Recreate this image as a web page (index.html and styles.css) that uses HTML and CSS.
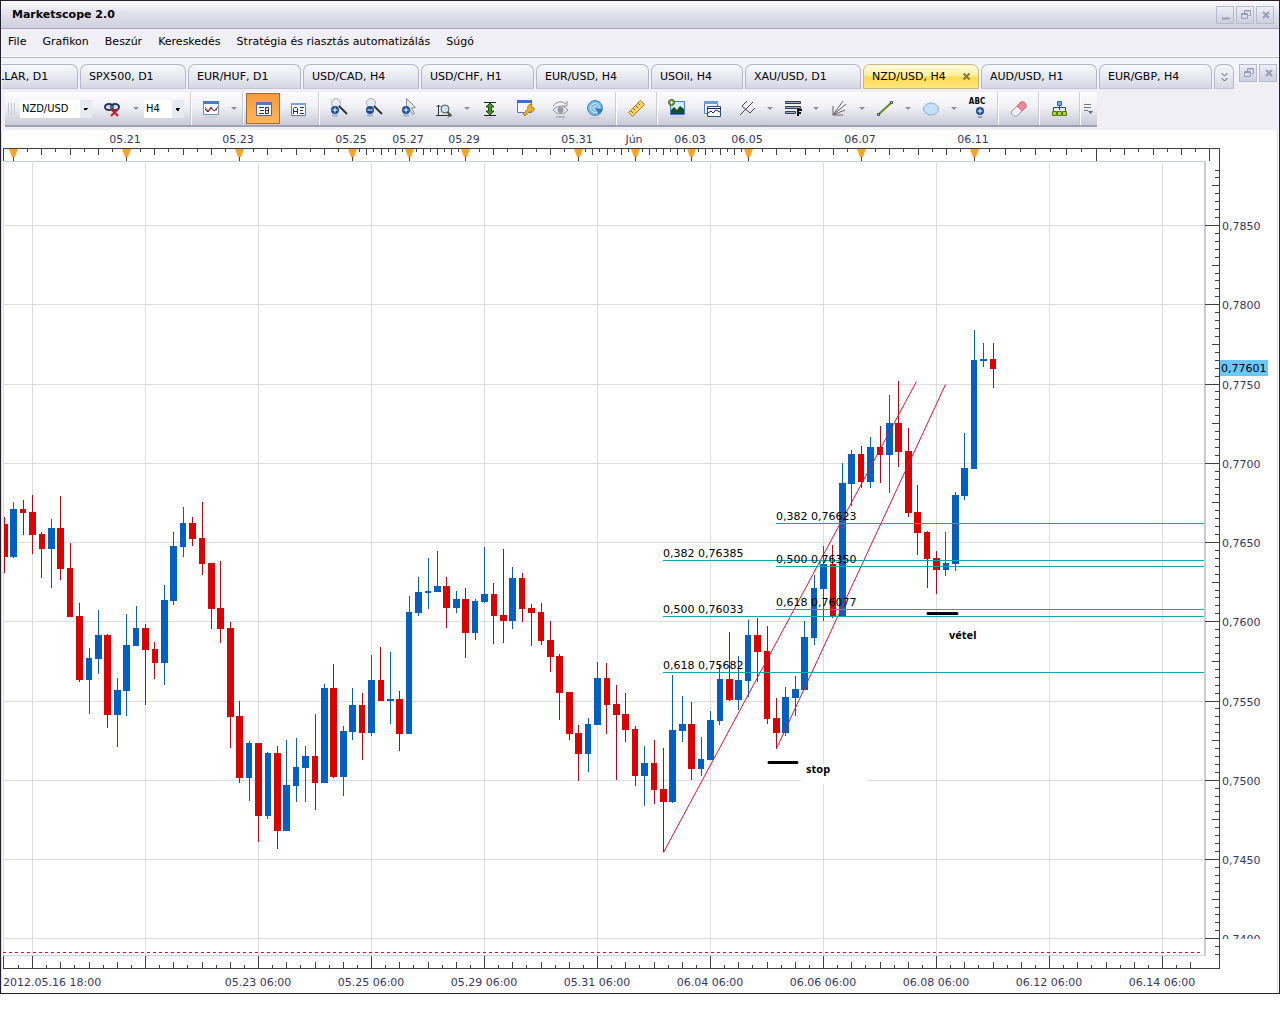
FILE: index.html
```html
<!DOCTYPE html>
<html lang="hu">
<head>
<meta charset="utf-8">
<title>Marketscope 2.0</title>
<link rel="stylesheet" href="styles.css">
</head>
<body>
<div class="window">
  <header class="titlebar">
    <h1 class="title">Marketscope 2.0</h1>
    <div class="winbtns">
      <button class="winbtn" aria-label="Minimize"><svg width="18" height="18"><path d="M5 12.500h8" class="glyph wide"/></svg></button>
      <button class="winbtn" aria-label="Restore"><svg width="18" height="18"><path d="M7.500 7v-2.500h6v5h-2M7 5h7M4.500 7.500h6v5h-6zM4 8.500h7" class="glyph"/></svg></button>
      <button class="winbtn" aria-label="Close"><svg width="18" height="18"><path d="M6 6l6 6M12 6l-6 6" class="glyph wide"/></svg></button>
    </div>
  </header>
  <nav class="menubar">
    <button class="menu">File</button>
    <button class="menu">Grafikon</button>
    <button class="menu">Beszúr</button>
    <button class="menu">Kereskedés</button>
    <button class="menu">Stratégia és riasztás automatizálás</button>
    <button class="menu">Súgó</button>
  </nav>
  <div class="tabrow">
    <div class="tabs">
      <button class="tab cut"><span class="cut-label">LLAR, D1</span></button>
      <button class="tab small">SPX500, D1</button>
      <button class="tab mid">EUR/HUF, D1</button>
      <button class="tab">USD/CAD, H4</button>
      <button class="tab mid">USD/CHF, H1</button>
      <button class="tab mid">EUR/USD, H4</button>
      <button class="tab short">USOil, H4</button>
      <button class="tab">XAU/USD, D1</button>
      <button class="tab active">NZD/USD, H4<svg width="9" height="9"><path d="M1.500 1.500l6 6M7.500 1.500l-6 6" stroke="#8a7440" stroke-width="2"/></svg></button>
      <button class="tab">AUD/USD, H1</button>
      <button class="tab mid">EUR/GBP, H4</button>
      <button class="tab more" aria-label="More tabs"><svg width="9" height="10"><path d="M1.500 1l3 3 3-3M1.500 6l3 3 3-3" fill="none" stroke="#555"/></svg></button>
    </div>
    <div class="docbtns">
      <button class="winbtn" aria-label="Restore chart"><svg width="18" height="18"><path d="M7.500 7v-2.500h6v5h-2M7 5h7M4.500 7.500h6v5h-6zM4 8.500h7" class="glyph"/></svg></button>
      <button class="winbtn" aria-label="Close chart"><svg width="18" height="18"><path d="M6 6l6 6M12 6l-6 6" class="glyph wide"/></svg></button>
    </div>
  </div>
  <div class="toolrow">
    <div class="toolbar">
      <span class="grip"></span>
      <select class="combo symbol" aria-label="Symbol"><option>NZD/USD</option></select>
      <button class="tool" aria-label="Unlink"><svg width="24" height="24" fill="none"><ellipse cx="8" cy="10" rx="4" ry="3" stroke="#1d3557" stroke-width="2"/><ellipse cx="14" cy="10" rx="4" ry="3" stroke="#1d3557" stroke-width="2"/><path d="M7 10h8" stroke="#8fa8c4"/><path d="M10 12l7 7M17 12l-7 7" stroke="#d01828" stroke-width="2"/></svg></button>
      <button class="caret" aria-label="Link options"></button>
      <select class="combo period" aria-label="Period"><option>H4</option></select>
      <span class="sep"></span>
      <button class="tool" aria-label="Chart type"><svg width="24" height="24" fill="none"><path d="M4.500 4.500h15v13h-15z" fill="#fff" stroke="#7890b8"/><path d="M4 4h16v3H4z" fill="#4a7cc8"/><path d="M6 12l3 3 3-4 3 3 3-2" stroke="#222"/><path d="M6 10l3 4 3-4 3 4 4-4" stroke="#c83030"/><path d="M6 20h13" stroke="#c4c6d4"/></svg></button>
      <button class="caret" aria-label="Chart type options"></button>
      <span class="sep"></span>
      <button class="tool pressed" aria-label="Data window"><svg width="24" height="24" fill="none"><path d="M5.500 5.500h15v13h-15z" fill="#f4f4fc" stroke="#506898"/><path d="M5 5h16v3H5z" fill="#4a7cc8"/><path d="M8 10.500h5M9 13.500h4M8 16.500h5M14.500 10v7M14 10.500h3.500v6H14M14 13.500h4" stroke="#333"/></svg></button>
      <button class="tool" aria-label="Labels"><svg width="24" height="24" fill="none"><path d="M5.500 6.500h14v12h-14z" fill="#f8f8ff" stroke="#607cb0"/><path d="M5 6h15v2H5z" fill="#7ca0d8"/><path d="M7.500 17v-5.500l1-1h2l1 1V17M8 14.500h4M14 10.500h4M14 13.500h3M14 16.500h4" stroke="#333"/><path d="M6 20h13" stroke="#c4c6d4"/></svg></button>
      <span class="sep"></span>
      <button class="tool" aria-label="Zoom in"><svg width="24" height="24" fill="none"><circle cx="9" cy="6" r="4.500" fill="#e8eaf0" stroke="#a8acb8"/><path d="M12 9l8 8" stroke="#333" stroke-width="2"/><circle cx="8" cy="13" r="4" fill="#1c4c94"/><path d="M5.500 13h5M8 10.500v5" stroke="#fff"/><path d="M5 18.500h6" stroke="#9caed0" stroke-width="2"/></svg></button>
      <button class="tool" aria-label="Zoom out"><svg width="24" height="24" fill="none"><circle cx="9" cy="6" r="4.500" fill="#e8eaf0" stroke="#a8acb8"/><path d="M12 9l8 8" stroke="#333" stroke-width="2"/><circle cx="8" cy="13" r="4" fill="#1c4c94"/><path d="M5.500 13h5" stroke="#fff"/><path d="M5 18.500h6" stroke="#9caed0" stroke-width="2"/></svg></button>
      <button class="tool" aria-label="Zoom area"><svg width="24" height="24" fill="none"><path d="M9.500 1.500v13l3-3 3 6 2-1-3-5.500 4-.5z" fill="#e8e8ec" stroke="#8a8c94"/><circle cx="9" cy="13" r="4" fill="#1c4c94"/><path d="M6.500 13h5M9 10.500v5" stroke="#fff"/><path d="M6 18.500h6" stroke="#9caed0" stroke-width="2"/></svg></button>
      <button class="tool" aria-label="Scale"><svg width="24" height="24" fill="none"><path d="M6.500 8v11M4.500 10l2-2 2 2M4 18.500h14M16 16.500l2 2-2 2" stroke="#333"/><circle cx="13" cy="12" r="4" fill="#c8e4f8" stroke="#555"/><path d="M15.500 15l4 4" stroke="#555" stroke-width="2"/></svg></button>
      <button class="caret" aria-label="Scale options"></button>
      <button class="tool" aria-label="Fit height"><svg width="24" height="24" fill="none"><path d="M6 5.500h12M6 18.500h12" stroke="#222"/><path d="M12 6l4 4h-2.500v4H16l-4 4-4-4h2.500v-4H8z" fill="#4c9028" stroke="#1c4c14"/><path d="M8 21h8" stroke="#b8bac4"/></svg></button>
      <button class="tool" aria-label="Properties"><svg width="24" height="24" fill="none"><path d="M4.500 3.500h14v12h-14z" fill="#f4f6ff" stroke="#4a7cc8"/><path d="M4 3h15v3H4z" fill="#3c70c8"/><path d="M10 17l5-5c-1-3 1-5 4-5l-1 3 3 1c1 3-2 4-4 3l-5 5z" fill="#f4b428" stroke="#b87c10"/></svg></button>
      <button class="tool" aria-label="Show or hide"><svg width="24" height="24" fill="none" stroke="#8c8e98"><path d="M5 13c4-5 11-5 15 0-4 5-11 5-15 0z" fill="#e4e5ea"/><circle cx="12.500" cy="13" r="2.500" fill="#9a9ca4"/><path d="M5 9c4-5 9-5 13-2M19 4v5h-5M8 20h9"/></svg></button>
      <button class="tool" aria-label="Web"><svg width="24" height="24" fill="none"><circle cx="12" cy="11" r="7.500" fill="#78b8e4" stroke="#3c84bc"/><circle cx="12" cy="11" r="4.500" stroke="#d4ecfc"/><circle cx="12" cy="11" r="2" stroke="#d4ecfc"/><path d="M12 11l4 6c2-1 3-3 3-5z" fill="#3078b8"/><path d="M7 21h10" stroke="#b4c0d4"/></svg></button>
      <span class="sep"></span>
      <button class="tool" aria-label="Ruler"><svg width="24" height="24" fill="none"><path d="M4.500 15.500l12-12 4 4-12 12z" fill="#f8d468" stroke="#a87c28"/><path d="M7 14l2 2M9.500 11.500l1.500 1.500M12 9l2 2M14.500 6.500L16 8" stroke="#80601c"/></svg></button>
      <span class="sep"></span>
      <button class="tool" aria-label="Add picture"><svg width="24" height="24" fill="none"><path d="M5.500 4.500h14v13h-14z" fill="#d4ecfc" stroke="#4a7cc8"/><path d="M6 17v-4l3-3 3 3 3-4 4 3v5z" fill="#145028"/><circle cx="6.500" cy="5.500" r="3" fill="#78a83c" stroke="#3c641c"/><path d="M5 5.500h3M6.500 4v3" stroke="#fff"/><path d="M6 20h13" stroke="#c0c6d0"/></svg></button>
      <button class="tool" aria-label="Add indicator"><svg width="24" height="24" fill="none"><path d="M4.500 4.500h13v12h-13z" fill="#f4f6ff" stroke="#4a7cc8"/><path d="M4 4h14v3H4z" fill="#6c9ce0"/><path d="M7.500 9.500h13v10h-13z" fill="#fff" stroke="#285088"/><path d="M7 11.500h14M8 16l3-2 2 2 3-3 4 2" stroke="#222"/></svg></button>
      <button class="tool" aria-label="Pitchfork"><svg width="24" height="24" fill="none" stroke="#444"><path d="M5 18l6-6M7 9l8 7M7 9l5-5M11 12l7-7M15 16l5-5"/></svg></button>
      <button class="caret" aria-label="Pitchfork options"></button>
      <button class="tool" aria-label="Fibonacci"><svg width="24" height="24" fill="none"><path d="M4.500 4.500h15v2h-15zM4.500 9.500h15v2h-15zM4.500 14.500h10v2h-10z" fill="#9cacc0" stroke="#34404c"/><path d="M17 19v-6h4M17 16h3" stroke="#111" stroke-width="2"/></svg></button>
      <button class="caret" aria-label="Fibonacci options"></button>
      <button class="tool" aria-label="Fan lines"><svg width="24" height="24" fill="none" stroke="#666"><path d="M6 18L16 4M6 18L19 7M6 18l12-5M6 18V9M6 18h10"/></svg></button>
      <button class="caret" aria-label="Fan options"></button>
      <button class="tool" aria-label="Line"><svg width="24" height="24" fill="none"><path d="M6 17L18 6" stroke="#648c1c" stroke-width="2"/><path d="M4.500 16.500h2v2h-2zM17.500 4.500h2v2h-2z" fill="#ddd" stroke="#445"/></svg></button>
      <button class="caret" aria-label="Line options"></button>
      <button class="tool" aria-label="Ellipse"><svg width="24" height="24"><ellipse cx="12" cy="12" rx="7.500" ry="6" fill="#c4e0f8" stroke="#88aed0"/></svg></button>
      <button class="caret" aria-label="Shape options"></button>
      <button class="tool" aria-label="Text label"><span class="abc">ABC</span><svg width="24" height="14" fill="none"><circle cx="15" cy="5" r="4" fill="#1c4c94"/><path d="M12.500 5h5M15 2.500v5" stroke="#fff"/><path d="M13 11h4" stroke="#8ca4cc" stroke-width="2"/></svg></button>
      <span class="sep"></span>
      <button class="tool" aria-label="Eraser"><svg width="24" height="24"><path d="M5 15l6-6 5 5-5 5c-2 1-6-1-6-4z" fill="#f0f0f0" stroke="#98989c"/><path d="M11 9l4-4c2-1 6 1 5 5l-4 4z" fill="#f08898" stroke="#c86878"/></svg></button>
      <span class="sep"></span>
      <button class="tool" aria-label="Hierarchy"><svg width="24" height="24" fill="none"><path d="M12.500 8v5M6.500 14v-3.500h12V14" stroke="#345"/><path d="M10.500 4.500h4v4h-4z" fill="#68b0f4" stroke="#2464b4"/><path d="M5.500 14.500h4v4h-4zM10.500 14.500h4v4h-4zM15.500 14.500h4v4h-4z" fill="#b4d424" stroke="#4c7c10"/></svg></button>
      <span class="sep"></span>
      <button class="overflow" aria-label="More tools"><svg width="10" height="12"><path d="M1 1.500h7M1 4.500h7M1 7.500h4" stroke="#777"/><path d="M5 8h5l-2.500 3z" fill="#666"/></svg></button>
    </div>
  </div>
  <main class="chart">
    <svg id="chart" viewBox="1 130 1278 863" role="img" aria-label="NZD/USD, H4"></svg>
  </main>
</div>
<script src="chart.js"></script>
</body>
</html>
```
FILE: styles.css
```css
* { box-sizing: border-box; }
body { margin: 0; background: #fff; font: 11px/14px "DejaVu Sans", Verdana, sans-serif; color: #000; }
button, select { font: inherit; color: inherit; margin: 0; padding: 0; border: 0; background: none; border-radius: 0; }
svg { display: block; }

.window { border: 1px solid #22202c; background: #f0eff5; overflow: hidden; }

.titlebar { display: flex; align-items: center; justify-content: space-between; height: 28px; padding: 0 5px 0 11px; background: linear-gradient(#fcfcff, #e4e4ee 40%, #cfcfde); border-bottom: 1px solid #a6a6b8; }
.title { margin: 0; font-size: 11px; line-height: 14px; }
.winbtns, .docbtns { display: flex; gap: 2px; }
.winbtn { width: 18px; height: 18px; border: 1px solid #b8bacc; background: linear-gradient(#eeeef6, #cdcfe0); display: flex; align-items: center; justify-content: center; flex: none; }
.glyph { fill: none; stroke: #9a9cb6; }
.wide { stroke-width: 2; }

.menubar { display: flex; align-items: center; gap: 16px; height: 28px; padding: 0 7px 1px; border-bottom: 1px solid #fff; white-space: nowrap; }

.tabrow { display: flex; justify-content: space-between; align-items: flex-end; height: 32px; padding: 0 2px 0 1px; border-top: 1px solid #b4b4c4; background: linear-gradient(#f4f4fc, #f0eff5); }
.tabs { display: flex; gap: 2px; min-width: 0; overflow: hidden; }
.tab { flex: none; width: 116px; height: 25px; padding: 0 8px; border: 1px solid #b6b6ca; border-bottom-color: #c4c4d4; border-radius: 7px 7px 0 0; background: linear-gradient(#f6f6fb, #e9e9f1 50%, #d6d6e4); text-align: left; white-space: nowrap; }
.tab.small { width: 106px; }
.tab.mid { width: 113px; }
.tab.short { width: 92px; }
.tab.cut { width: 76px; padding: 0; border-left: 0; border-top-left-radius: 0; overflow: hidden; }
.cut-label { margin-left: -4px; }
.tab.active { display: flex; align-items: center; justify-content: space-between; padding: 0 7px 0 8px; background: linear-gradient(#fffbe0, #ffef9c 45%, #ffdc50 55%, #ffe680); border-color: #c8b880; }
.tab.more { width: 20px; padding: 0; display: flex; align-items: center; justify-content: center; }
.docbtns { align-self: center; padding-bottom: 1px; }

.toolrow { height: 41px; padding: 3px 4px; display: flex; }
.toolbar { display: flex; align-items: center; gap: 1px; height: 35px; padding-right: 4px; background: linear-gradient(#fdfdff, #f0f0f6 45%, #c9c9d8); border-bottom: 2px solid #a0a0b2; }
.grip { flex: none; width: 14px; height: 12px; background: repeating-linear-gradient(90deg, #c8c8d4 0 1px, transparent 1px 3px) 3px 0 / 8px 12px no-repeat; }
.combo {
  flex: none;
  height: 18px;
  padding-left: 2px;
  appearance: none;
  font-family: "DejaVu Sans Condensed", Tahoma, sans-serif;
  background:
    linear-gradient(45deg, transparent 50%, #000 0) right 6px top 8px / 3px 3px no-repeat,
    linear-gradient(-45deg, transparent 50%, #000 0) right 3px top 8px / 3px 3px no-repeat,
    linear-gradient(#e9e9f1, #e9e9f1) right / 12px 18px no-repeat,
    #fff;
}
.symbol { width: 72px; margin-right: 3px; }
.period { width: 40px; margin: 0 3px 0 2px; }
.tool { flex: none; width: 34px; height: 31px; display: flex; flex-direction: column; align-items: center; justify-content: center; }
.pressed { background: linear-gradient(#f49c3c, #ffb45c); border: 1px solid #a86c28; }
.caret { flex: none; width: 10px; height: 20px; display: flex; align-items: center; justify-content: center; }
.caret::before { content: ""; border: 3px solid transparent; border-top-color: #90909c; border-bottom: 0; }
.sep { flex: none; width: 5px; height: 33px; background: linear-gradient(#d2d2de, #c0c0ce) 2px 0 / 1px 33px no-repeat, linear-gradient(#fff, #fff) 3px 0 / 1px 33px no-repeat; }
.overflow { flex: none; width: 10px; }
.abc { font: bold 8px/9px "DejaVu Sans Condensed", sans-serif; }

.chart { background: #fff; }
.chart svg { width: 100%; height: auto; }
.axis-text { fill: #3a3560; }
.fib-text { fill: #000; }
.note { font: bold 11px "Noto Sans", "Open Sans", sans-serif; fill: #000; }
```
FILE: chart.js
```js
const svg = document.getElementById('chart');
const NS = 'http://www.w3.org/2000/svg';

function el(name, attrs, text) {
  const node = document.createElementNS(NS, name);
  for (const key in attrs) node.setAttribute(key, attrs[key]);
  if (text) node.textContent = text;
  svg.appendChild(node);
  return node;
}
const rect = (x, y, width, height, fill) => el('rect', { x, y, width, height, fill });
const label = (x, y, text, cls, anchor = 'start') =>
  el('text', { x, y, class: cls, 'text-anchor': anchor }, text);

const GRID = '#dcdcde', AXIS = '#404044', UP = '#0460c0', DOWN = '#d80404';

// Frame of the window and of the plot
rect(1, 130, 1, 863, '#dcdcea');
rect(1277, 130, 1, 863, '#dcdcea');
for (let i = 0; i < 11; i++) rect(32 + 113 * i, 163, 1, 793, GRID);
const rows = [225, 304, 384, 463, 542, 621, 701, 780, 859, 938];
rows.forEach(y => rect(3, y, 1202, 1, GRID));
rect(801, 764, 66, 20, '#fff');
rect(3, 161, 1203, 1, '#c8ccdc');
rect(3, 163, 1, 793, GRID);
rect(1204, 161, 2, 795, '#cbcbd7');
rect(3, 955, 1203, 1, '#ccd6d6');

// Top axis: day markers
rect(3, 148, 1217, 1, AXIS);
rect(3, 148, 1, 13, AXIS);
const marks = [13, 126, 239, 352, 409, 465, 578, 635, 691, 748, 861, 974, 1096, 1209];
marks.forEach((x, i) => {
  if (i < marks.length - 1) {
    const step = (marks[i + 1] - x) / 8;
    for (let k = 1; k < 8; k++) rect(Math.round(x + k * step), 149, 1, k % 2 ? 3 : 6, AXIS);
  }
  rect(x, 149, 1, 12, AXIS);
  if (i < 12) el('path', { d: `M${x - 4} 149h9l-3 8h-3z`, fill: '#f8a428' });
});
['', '05.21', '05.23', '05.25', '05.27', '05.29', '05.31', 'Jún', '06.03', '06.05', '06.07', '06.11']
  .forEach((t, i) => t && label(marks[i] - 1, 143, t, 'axis-text', 'middle'));

// Bottom axis
rect(3, 968, 1217, 1, AXIS);
rect(3, 956, 1, 12, AXIS);
for (let k = -1; k < 83; k++) {
  const x = Math.floor(32.5 + k * 14.125);
  const h = k % 8 === 0 ? 12 : k % 2 ? 3 : 6;
  if (x < 1206) rect(x, 968 - h, 1, h, AXIS);
}
label(3, 986, '2012.05.16 18:00', 'axis-text');
['05.23', '05.25', '05.29', '05.31', '06.04', '06.06', '06.08', '06.12', '06.14']
  .forEach((t, i) => label(258 + 113 * i, 986, t + ' 06:00', 'axis-text', 'middle'));

// Price axis
rect(1219, 148, 1, 821, AXIS);
for (let k = -7; k < 93; k++) {
  const w = k % 10 === 0 ? 14 : k % 5 === 0 ? 7 : 4;
  rect(1219 - w, Math.floor(225.5 + k * 7.925), w, 1, AXIS);
}
rows.forEach((y, i) => {
  const t = label(1222, y + 5, '0,' + (7850 - 50 * i), 'axis-text');
  if (i === 9) t.setAttribute('clip-path', 'url(#edge)');
});
const clip = el('clipPath', { id: 'edge' });
clip.appendChild(rect(1220, 930, 58, 9, '#fff'));
rect(1220, 360, 48, 16, '#6cc8fc');
label(1221, 372, '0,77601', 'fib-text');

// Candles: direction, high, body top, body bottom, low
const candles = `
R 517 524 557 573|B 502 509 557 558|R 500 509 513 535|R 495 512 535 554|R 532 534 549 578
B 519 528 549 588|R 496 528 569 580|R 543 568 617 617|R 603 616 680 682|B 648 658 680 714
B 610 635 659 674|R 634 635 715 728|B 678 690 715 747|B 614 645 691 716|B 606 628 646 646
R 624 628 650 705|R 642 649 663 679|B 585 600 663 685|B 532 546 601 605|B 507 523 547 557
R 517 523 539 546|R 502 538 564 575|R 563 563 609 629|R 561 608 629 643|R 622 628 717 748
R 701 716 778 783|B 741 743 778 801|R 743 743 816 842|B 752 753 816 819|R 746 753 831 849
B 740 785 831 831|B 738 767 786 802|B 746 756 768 802|R 714 756 783 810|B 684 688 783 783
R 664 688 777 778|B 726 731 777 796|B 688 705 732 740|R 693 705 733 760|B 655 680 733 736
R 647 680 701 701|B 652 699 701 724|R 691 699 734 751|B 596 612 734 734|B 577 592 613 616
B 558 591 593 609|B 551 586 592 592|R 577 586 608 628|B 591 599 608 613|R 588 599 633 658
B 599 601 633 640|B 547 594 602 603|R 583 594 616 644|R 549 615 621 643|B 567 578 621 629
R 573 578 609 622|R 604 608 613 646|R 603 612 641 645|R 621 640 657 672|R 654 656 693 720
R 692 692 734 740|R 725 733 754 781|B 718 724 754 772|B 662 678 725 725|R 663 678 705 734
R 685 704 715 780|R 693 714 730 742|R 726 729 776 786|B 746 763 776 806|R 740 763 790 804
R 748 789 802 852|B 675 730 802 803|B 696 724 731 742|R 702 724 769 780|B 737 759 769 776
B 711 720 760 760|B 664 679 721 725|R 632 679 700 701|B 656 680 700 710|B 620 635 681 697
R 618 635 652 682|R 626 651 719 724|R 698 718 733 749|B 687 697 733 736|B 676 689 698 716
B 621 637 690 690|B 575 588 638 645|B 546 564 589 621|R 545 564 616 618|B 463 483 616 616
B 450 454 484 506|R 446 454 482 488|B 437 447 482 488|R 426 447 455 483|B 395 423 455 493
R 381 423 452 467|R 428 451 513 517|R 485 512 533 555|R 531 532 559 588|R 551 558 570 594
B 532 563 570 576|B 492 495 564 571|B 433 468 496 500|B 330 360 469 469|B 343 359 361 367
R 343 359 369 388`.trim().split(/[|\n]/);
candles.forEach((row, i) => {
  const [dir, high, top, bottom, low] = row.split(' ');
  const c = 32.5 + (i - 3) * 113 / 12;
  const left = Math.max(4, Math.round(c - 3.4)), right = Math.round(c + 3.3);
  rect(Math.floor(c), high, 1, low - high, dir === 'R' ? '#b00818' : '#0c5ca8');
  rect(left, top, right - left, bottom - top, dir === 'R' ? DOWN : UP);
});

// Channel lines and Fibonacci levels
el('path', { d: 'M663.5 852.5L916.5 381.500M776.5 748.5L945.5 384.5', stroke: '#cc1838', fill: 'none' });
[[663, 560, '0,382 0,76385'], [663, 616, '0,500 0,76033'], [663, 672, '0,618 0,75682'],
 [776, 523, '0,382 0,76623'], [776, 566, '0,500 0,76350'], [776, 609, '0,618 0,76077']]
  .forEach(([x, y, t]) => {
    rect(x, y, 1204 - x, 1, '#18a4a8');
    label(x, y - 3, t, 'fib-text');
  });

el('path', { d: 'M3 952.5H1201', stroke: '#c01838', 'stroke-dasharray': '3 3' });

// Hand-made notes
el('path', { d: 'M769 762.5h28M928 613.5h29', stroke: '#000', 'stroke-width': 3, 'stroke-linecap': 'round' });
label(806, 773, 'stop', 'note');
label(949, 639, 'vétel', 'note');
```
